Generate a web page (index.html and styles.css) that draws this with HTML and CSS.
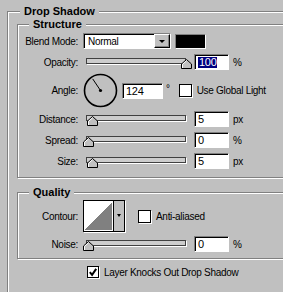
FILE: index.html
```html
<!DOCTYPE html>
<html lang="en">
<head>
    <meta charset="UTF-8">
    <title>Drop Shadow</title>
    <link rel="stylesheet" href="styles.css">
</head>
<body>
    <div class="group outer">
        <span class="legend">Drop Shadow</span>

        <div class="group structure">
            <span class="legend">Structure</span>

            <div class="row blend">
                <span class="label">Blend Mode:</span>
                <div class="select">
                    <span class="select-text">Normal</span>
                    <span class="select-btn"><span class="arrow"></span></span>
                </div>
                <span class="swatch"></span>
            </div>

            <div class="row">
                <span class="label">Opacity:</span>
                <div class="slider">
                    <div class="track"></div>
                    <svg class="thumb" style="left: 95px" width="11" height="10" viewBox="0 0 11 10"><polygon points="0.5,9.5 0.5,5 5.5,0.5 10.5,5 10.5,9.5" fill="#c0c0c0" stroke="#000"/><polyline points="1.5,9 1.5,5.4 5.5,1.8" fill="none" stroke="#fff"/></svg>
                </div>
                <div class="field"><span class="selected">100</span></div>
                <span class="unit">%</span>
            </div>

            <div class="row angle">
                <span class="label">Angle:</span>
                <svg class="dial" width="36" height="36" viewBox="0 0 36 36">
                    <circle cx="17.5" cy="17.5" r="16" fill="none" stroke="#000" stroke-width="1.6"/>
                    <line x1="17.5" y1="17.5" x2="9.7" y2="5.9" stroke="#000" stroke-width="1"/>
                    <circle cx="17.5" cy="17.5" r="1.6" fill="#000"/>
                </svg>
                <div class="field wide">124</div>
                <span class="degree">°</span>
                <span class="check"></span>
                <span class="check-label">Use Global Light</span>
            </div>

            <div class="row">
                <span class="label">Distance:</span>
                <div class="slider">
                    <div class="track"></div>
                    <svg class="thumb" style="left: 1px" width="11" height="10" viewBox="0 0 11 10"><polygon points="0.5,9.5 0.5,5 5.5,0.5 10.5,5 10.5,9.5" fill="#c0c0c0" stroke="#000"/><polyline points="1.5,9 1.5,5.4 5.5,1.8" fill="none" stroke="#fff"/></svg>
                </div>
                <div class="field">5</div>
                <span class="unit">px</span>
            </div>

            <div class="row">
                <span class="label">Spread:</span>
                <div class="slider">
                    <div class="track"></div>
                    <svg class="thumb" style="left: -3px" width="11" height="10" viewBox="0 0 11 10"><polygon points="0.5,9.5 0.5,5 5.5,0.5 10.5,5 10.5,9.5" fill="#c0c0c0" stroke="#000"/><polyline points="1.5,9 1.5,5.4 5.5,1.8" fill="none" stroke="#fff"/></svg>
                </div>
                <div class="field">0</div>
                <span class="unit">%</span>
            </div>

            <div class="row">
                <span class="label">Size:</span>
                <div class="slider">
                    <div class="track"></div>
                    <svg class="thumb" style="left: 1px" width="11" height="10" viewBox="0 0 11 10"><polygon points="0.5,9.5 0.5,5 5.5,0.5 10.5,5 10.5,9.5" fill="#c0c0c0" stroke="#000"/><polyline points="1.5,9 1.5,5.4 5.5,1.8" fill="none" stroke="#fff"/></svg>
                </div>
                <div class="field">5</div>
                <span class="unit">px</span>
            </div>
        </div>

        <div class="group quality">
            <span class="legend">Quality</span>

            <div class="row contour-row">
                <span class="label">Contour:</span>
                <div class="contour">
                    <span class="preview"></span>
                    <span class="contour-btn"><span class="arrow small"></span></span>
                </div>
                <span class="check aa"></span>
                <span class="check-label">Anti-aliased</span>
            </div>

            <div class="row">
                <span class="label">Noise:</span>
                <div class="slider">
                    <div class="track"></div>
                    <svg class="thumb" style="left: -3px" width="11" height="10" viewBox="0 0 11 10"><polygon points="0.5,9.5 0.5,5 5.5,0.5 10.5,5 10.5,9.5" fill="#c0c0c0" stroke="#000"/><polyline points="1.5,9 1.5,5.4 5.5,1.8" fill="none" stroke="#fff"/></svg>
                </div>
                <div class="field">0</div>
                <span class="unit">%</span>
            </div>
        </div>

        <div class="row knock">
            <span class="check checked">
                <svg width="11" height="11" viewBox="0 0 11 11"><polyline points="2,5 4.5,8 9,1.5" fill="none" stroke="#000" stroke-width="2.2"/></svg>
            </span>
            <span class="check-label">Layer Knocks Out Drop Shadow</span>
        </div>
    </div>
</body>
</html>
```

FILE: styles.css
```css
* {
    margin: 0;
    padding: 0;
    box-sizing: border-box;
}

body {
    width: 283px;
    height: 292px;
    overflow: hidden;
    background: #c0c0c0;
    font-family: "Liberation Sans", Arial, sans-serif;
    font-size: 10px;
    letter-spacing: -0.3px;
    color: #000;
}

/* etched group boxes */
.group {
    position: relative;
    border: 1px solid #808080;
    box-shadow: inset 1px 1px 0 #fff, 1px 1px 0 #fff;
}

.outer {
    margin: 11px 0 0 7px;
    width: 320px;
    height: 300px;
    padding: 12px 0 0 9px;
}

.legend {
    position: absolute;
    top: -8px;
    left: 12px;
    padding: 0 4px;
    line-height: 14px;
    background: #c0c0c0;
    font-size: 11px;
    font-weight: bold;
    letter-spacing: 0;
}

.structure .legend,
.quality .legend {
    top: -8px;
    left: 11px;
}

.structure {
    width: 320px;
    padding: 8px 0 8px;
}

.quality {
    width: 320px;
    margin-top: 14px;
    padding: 7px 0 6px;
}

.row {
    display: flex;
    align-items: center;
    height: 16px;
    margin-top: 5px;
}

.row:first-of-type {
    margin-top: 0;
}

.label {
    width: 60px;
    text-align: right;
    flex-shrink: 0;
}

/* blend mode */
.select {
    display: flex;
    width: 88px;
    height: 16px;
    margin-left: 5px;
    background: #fff;
    border: 1px solid;
    border-color: #808080 #fff #fff #808080;
    box-shadow: inset 1px 1px 0 #000;
}

.select-text {
    flex: 1;
    padding: 2px 0 0 4px;
    line-height: 11px;
}

.select-btn {
    display: flex;
    align-items: center;
    justify-content: center;
    width: 16px;
    height: 14px;
    background: #c0c0c0;
    border: 1px solid;
    border-color: #fff #000 #000 #fff;
    box-shadow: inset -1px -1px 0 #808080;
}

.arrow {
    width: 0;
    height: 0;
    border-left: 3px solid transparent;
    border-right: 3px solid transparent;
    border-top: 3px solid #000;
}

.swatch {
    width: 31px;
    height: 15px;
    margin-left: 4px;
    background: #000;
    border: 1px solid;
    border-color: #808080 #fff #fff #808080;
}

/* sliders */
.slider {
    position: relative;
    width: 100px;
    height: 16px;
    margin-left: 8px;
}

.track {
    margin-top: 4px;
    height: 6px;
    background: #cdcdcd;
    border: 1px solid #404040;
    box-shadow: 1px 1px 0 #fff;
}

.thumb {
    position: absolute;
    top: 5px;
}

.field {
    width: 35px;
    height: 16px;
    margin-left: 8px;
    padding: 2px 0 0 3px;
    line-height: 11px;
    font-size: 11px;
    background: #fff;
    border: 1px solid;
    border-color: #808080 #fff #fff #808080;
    box-shadow: inset 1px 1px 0 #000;
}

.selected {
    display: inline-block;
    padding: 0 1px;
    background: #000080;
    color: #fff;
}

.unit {
    margin-left: 4px;
}

/* angle */
.angle {
    height: 35px;
    margin-top: 3px;
}

.dial {
    margin-left: 5px;
}

.field.wide {
    width: 41px;
    margin-left: 3px;
}

.degree {
    align-self: flex-start;
    margin: 10px 0 0 3px;
}

.check {
    display: flex;
    align-items: center;
    justify-content: center;
    width: 13px;
    height: 13px;
    margin-left: 9px;
    background: #fff;
    border: 1px solid #000;
    box-shadow: 1px 1px 0 #fff;
}

.check-label {
    margin-left: 5px;
}

.angle + .row {
    margin-top: 3px;
}

/* quality */
.contour-row {
    height: 32px;
}

.contour {
    display: flex;
    width: 42px;
    height: 32px;
    margin-left: 5px;
    border: 1px solid #000;
    box-shadow: 1px 1px 0 #fff;
}

.preview {
    width: 29px;
    border: 1px solid #fff;
    background: linear-gradient(to bottom right, #fff 50%, #808080 50%);
}

.contour-btn {
    display: flex;
    justify-content: center;
    width: 11px;
    padding-top: 13px;
    background: #c0c0c0;
    border-left: 1px solid #000;
}

.arrow.small {
    border-left-width: 2.5px;
    border-right-width: 2.5px;
}

.check.aa {
    margin-left: 13px;
}

.quality .row + .row {
    margin-top: 4px;
}

.knock {
    margin: 7px 0 0 70px;
    height: 12px;
}

.knock .check {
    width: 12px;
    height: 12px;
    margin-left: 0;
}
```
